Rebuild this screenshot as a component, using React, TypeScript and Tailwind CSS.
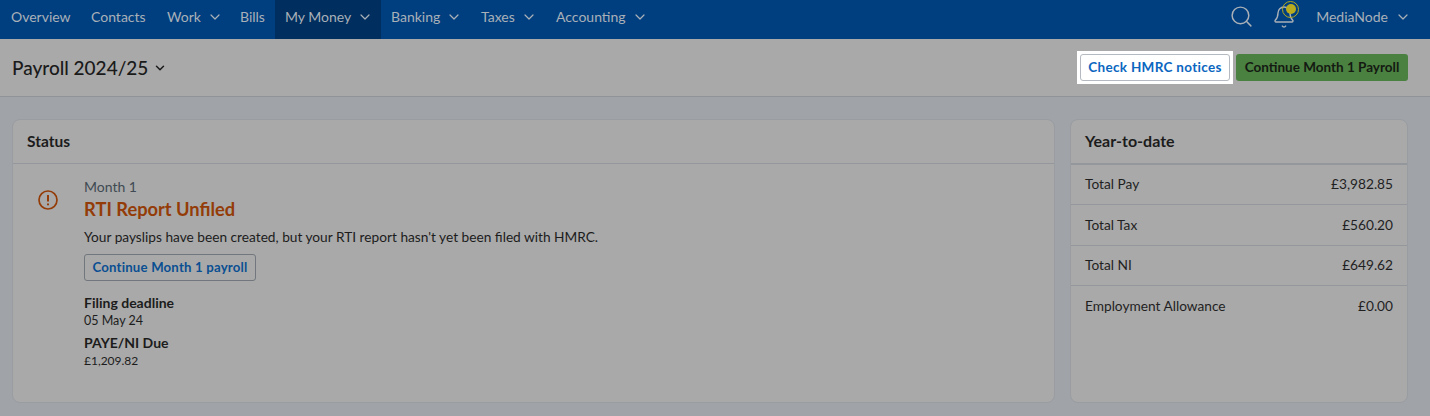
import React from 'react';
import { ChevronDown, Search, Bell } from 'lucide-react';

const navItems = [
  { label: 'Overview', w: 'w-[80px]' },
  { label: 'Contacts', w: 'w-[76px]' },
  { label: 'Work', w: 'w-[73px]', caret: true },
  { label: 'Bills', w: 'w-[45px]' },
  { label: 'My Money', w: 'w-[106px]', caret: true, active: true },
  { label: 'Banking', w: 'w-[90px]', caret: true },
  { label: 'Taxes', w: 'w-[75px]', caret: true },
  { label: 'Accounting', w: 'w-[110px]', caret: true },
];

const ytdRows = [
  { label: 'Total Pay', value: '£3,982.85', h: 'h-[40px] pb-[1px]' },
  { label: 'Total Tax', value: '£560.20', h: 'h-[41px]' },
  { label: 'Total NI', value: '£649.62', h: 'h-[40px]' },
  { label: 'Employment Allowance', value: '£0.00', h: 'h-[41px] pb-[1px]' },
];

export default function App() {
  return (
    <div className="h-[416px] w-[1430px] overflow-hidden bg-[#a0a4a9] font-['Lato',sans-serif] text-[#1c1c1c]">
      {/* Top nav */}
      <div className="flex h-[39px] items-center justify-between bg-[#003f7f] pr-[19px]">
        <div className="flex h-full items-stretch pl-[1px]">
          {navItems.map((item) => (
            <div
              key={item.label}
              className={`flex items-center gap-[6px] pb-[6px] pl-[10px] text-[14px] text-[#a9b0b8] ${item.w} ${item.active ? 'bg-[#002e5e]' : ''}`}
            >
              {item.label}
              {item.caret && <ChevronDown size={16} strokeWidth={1.8} />}
            </div>
          ))}
        </div>
        <div className="flex items-center pb-[6px] text-[#a9b0b8]">
          <Search size={25} strokeWidth={1.4} />
          <div className="relative ml-[18px] mr-[20px]">
            <Bell size={24} strokeWidth={1.4} />
            <span className="absolute -right-[3px] -top-[4px] flex h-[17px] w-[17px] items-center justify-center rounded-full border border-[#b5a820]">
              <span className="h-[10px] w-[10px] rounded-full bg-[#b9ab1f]" />
            </span>
          </div>
          <span className="text-[14px]">MediaNode</span>
          <ChevronDown size={16} strokeWidth={1.8} className="ml-[7px]" />
        </div>
      </div>

      {/* Page header */}
      <div className="flex h-[58px] items-center justify-between border-b border-[#8f9499] bg-[#a9a9a9] pl-[12px] pr-[22px]">
        <div className="mt-[1px] flex items-center gap-[5px] text-[19px] font-medium text-[#1a1a1a]">
          Payroll 2024/25
          <ChevronDown size={14} strokeWidth={2.5} />
        </div>
        <div className="flex items-center gap-[3px]">
          <div className="bg-white p-[3px]">
            <button className="h-[27px] w-[150px] rounded-[3px] border border-[#b4bac0] bg-white text-[13.5px] font-bold tracking-[0.3px] text-[#0b66c0]">
              Check HMRC notices
            </button>
          </div>
          <button className="h-[27px] w-[172px] rounded-[3px] bg-[#4a8040] text-[13.5px] font-bold text-[#141a12]">
            Continue Month 1 Payroll
          </button>
        </div>
      </div>

      {/* Cards */}
      <div className="flex gap-[15px] pl-[12px] pr-[22px] pt-[22px]">
        <div className="h-[284px] w-[1043px] rounded-[8px] border border-[#999ca0] bg-[#a9a9a9]">
          <div className="flex h-[44px] items-center border-b border-[#94979c] px-[14px] text-[15.5px] font-bold">
            Status
          </div>
          <div className="flex pl-[25px] pt-[14px]">
            <svg width="20" height="20" viewBox="0 0 20 20" fill="none" className="mt-[12px] shrink-0" stroke="#943c08" strokeWidth="1.7">
              <circle cx="10" cy="10" r="9" />
              <path d="M10 5v6.5" strokeWidth="2" />
              <path d="M10 13.5v1.8" strokeWidth="2" />
            </svg>
            <div className="ml-[26px]">
              <div className="text-[14px] leading-[17px] text-[#3f4a52]">Month 1</div>
              <div className="mt-[2px] text-[18.3px] font-bold leading-[24px] text-[#943c08]">RTI Report Unfiled</div>
              <div className="mt-[7px] text-[13.7px] leading-[18px] text-[#1c1c1c]">
                Your payslips have been created, but your RTI report hasn't yet been filed with HMRC.
              </div>
              <button className="mt-[8px] block h-[27px] w-[172px] rounded-[3px] border border-[#71777d] text-[13.2px] font-bold tracking-[0.2px] text-[#0a4f92]">
                Continue Month 1 payroll
              </button>
              <div className="mt-[13px] text-[14px] font-bold leading-[17px]">Filing deadline</div>
              <div className="mt-[2px] text-[12.5px] leading-[15px]">05 May 24</div>
              <div className="mt-[6px] text-[14px] font-bold leading-[17px]">PAYE/NI Due</div>
              <div className="mt-[2px] text-[12px] leading-[15px]">£1,209.82</div>
            </div>
          </div>
        </div>

        <div className="h-[284px] w-[338px] rounded-[8px] border border-[#999ca0] bg-[#a9a9a9]">
          <div className="flex h-[45px] items-center border-b-2 border-[#94979c] px-[14px] pb-[2px] text-[16px] font-bold">
            Year-to-date
          </div>
          {ytdRows.map((row, i) => (
            <div
              key={row.label}
              className={`flex ${row.h} items-center justify-between px-[14px] text-[13.7px] text-[#1f1f1f] ${i < 3 ? 'border-b border-[#94979c]' : ''}`}
            >
              <span>{row.label}</span>
              <span>{row.value}</span>
            </div>
          ))}
        </div>
      </div>
    </div>
  );
}
